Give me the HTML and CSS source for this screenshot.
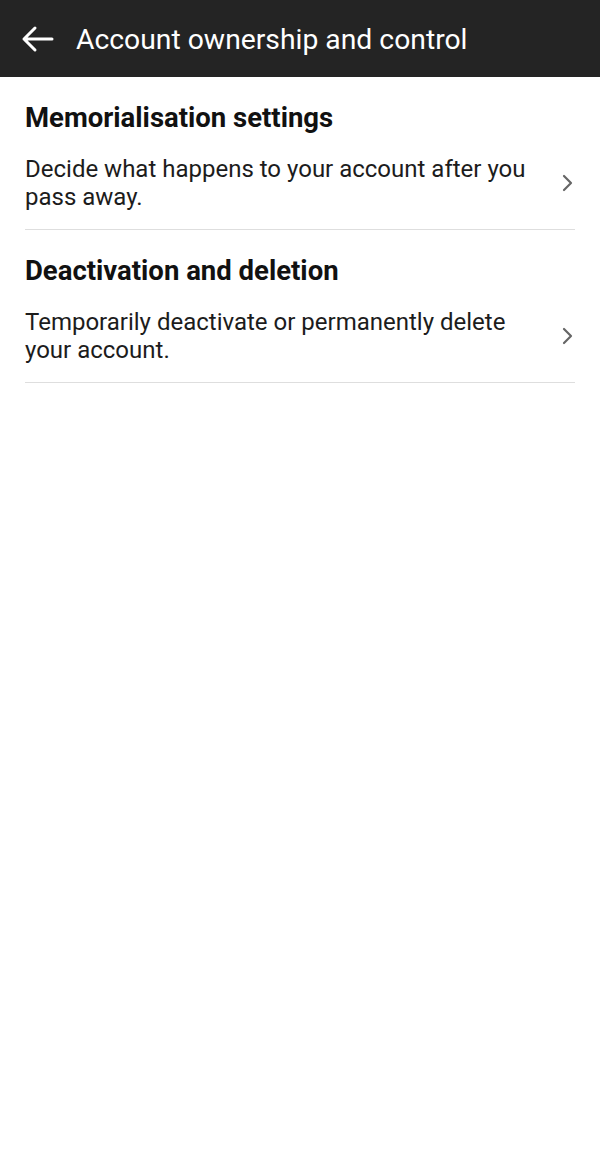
FILE: index.html
```html
<!DOCTYPE html>
<html>
<head>
<meta charset="utf-8">
<link rel="stylesheet" href="styles.css">
</head>
<body>
<header class="topbar">
  <svg class="back" width="34" height="28" viewBox="0 0 34 28">
    <path d="M32 14H4M15 3L4 14l11 11" fill="none" stroke="#fff" stroke-width="3" stroke-linecap="round" stroke-linejoin="round"/>
  </svg>
  <h1 class="title">Account ownership and control</h1>
</header>
<main class="list">
  <section class="item">
    <h2 class="item-title">Memorialisation settings</h2>
    <div class="item-row">
      <p class="item-desc">Decide what happens to your account after you pass away.</p>
      <svg class="chev" width="12" height="18" viewBox="0 0 12 18"><path d="M3 2l7 7-7 7" fill="none" stroke="#666" stroke-width="2.2" stroke-linecap="round" stroke-linejoin="round"/></svg>
    </div>
  </section>
  <section class="item">
    <h2 class="item-title">Deactivation and deletion</h2>
    <div class="item-row">
      <p class="item-desc">Temporarily deactivate or permanently delete your account.</p>
      <svg class="chev" width="12" height="18" viewBox="0 0 12 18"><path d="M3 2l7 7-7 7" fill="none" stroke="#666" stroke-width="2.2" stroke-linecap="round" stroke-linejoin="round"/></svg>
    </div>
  </section>
</main>
</body>
</html>
```

FILE: styles.css
```css
html, body {
  margin: 0;
  padding: 0;
  background: #fff;
  font-family: Roboto, "Liberation Sans", sans-serif;
  color: #111;
}
.topbar {
  height: 77px;
  background: #242424;
  display: flex;
  align-items: center;
  padding-left: 20px;
  padding-top: 1px;
  box-sizing: border-box;
}
.back {
  display: block;
  margin-right: 22px;
}
.title {
  margin: 0;
  font-size: 28.3px;
  font-weight: 400;
  color: #fff;
  line-height: 32px;
  padding-top: 2px;
}
.list {
  padding: 0 25px 0 25px;
}
.item {
  padding-top: 26px;
  padding-bottom: 18px;
  border-bottom: 1px solid #dedede;
}
.item-title {
  margin: 0;
  font-size: 27.5px;
  font-weight: 700;
  line-height: 30px;
}
.item-row {
  display: flex;
  align-items: center;
  justify-content: space-between;
  margin-top: 22px;
}
.item-desc {
  margin: 0;
  font-size: 24px;
  line-height: 28px;
  max-width: 515px;
  color: #1c1c1c;
}
.chev {
  display: block;
  margin-right: 2px;
  flex-shrink: 0;
}
```
